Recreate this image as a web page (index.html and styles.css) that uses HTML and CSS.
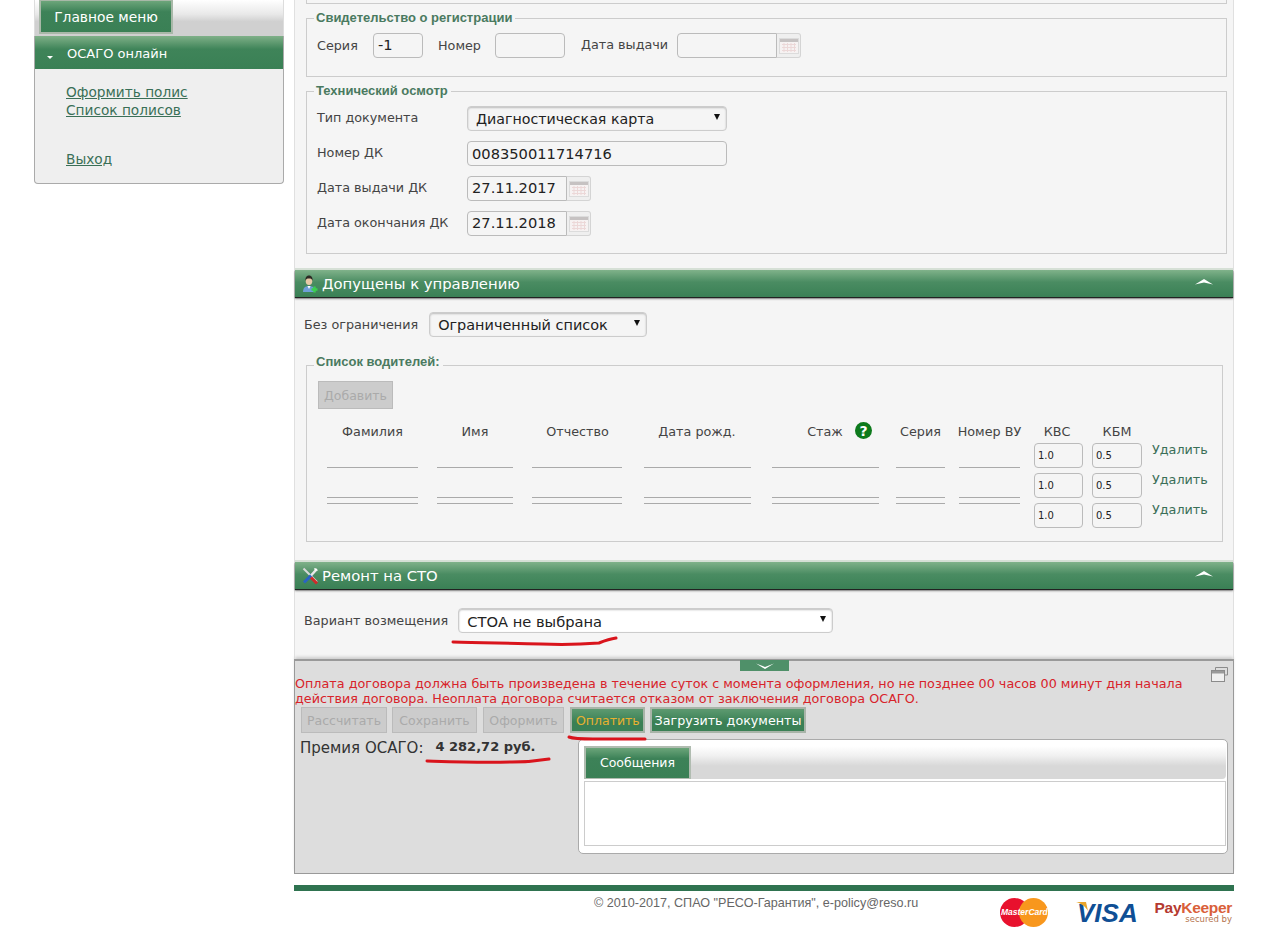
FILE: index.html
```html
<!DOCTYPE html>
<html lang="ru">
<head>
  <meta charset="UTF-8">
  <title>ОСАГО онлайн</title>
  <link rel="stylesheet" href="styles.css">
</head>
<body>
  <div class="page">
    <div class="sidebar">
      <div class="side-tabs"><div class="side-tab">Главное меню</div></div>
      <div class="side-box">
        <div class="side-head"><span class="side-arrow"></span>ОСАГО онлайн</div>
        <div class="side-links">
          <a href="#">Оформить полис</a>
          <a href="#">Список полисов</a>
          <a href="#" class="exit">Выход</a>
        </div>
      </div>
    </div>

    <div class="main">
      <div class="panel">
        <div class="prev-end"></div>

        <fieldset class="group reg">
          <legend>Свидетельство о регистрации</legend>
          <div class="reg-row">
            <span class="lbl lbl-ser">Серия</span>
            <input class="inp inp-ser" value="-1">
            <span class="lbl lbl-num">Номер</span>
            <input class="inp inp-num">
            <span class="lbl lbl-date">Дата выдачи</span>
            <div class="date">
              <input class="inp inp-date">
              <span class="cal"><svg width="20" height="16" viewBox="0 0 20 16"><rect x="0.5" y="0.5" width="19" height="15" fill="#f6f2f2" stroke="#dcdcdc"/><rect x="1" y="1" width="18" height="3" fill="#c6c2c2"/><path d="M3 6.5h14M3 9.5h14M3 12.5h14M5 5v9M8.500 5v9M12 5v9M15.500 5v9" stroke="#ecd8d8" stroke-width="1" fill="none"/></svg></span>
            </div>
          </div>
        </fieldset>

        <fieldset class="group tech">
          <legend>Технический осмотр</legend>
          <div class="form-grid">
            <span class="lbl">Тип документа</span>
            <div class="select sel-doc">Диагностическая карта</div>
            <span class="lbl">Номер ДК</span>
            <input class="inp inp-dk" value="008350011714716">
            <span class="lbl">Дата выдачи ДК</span>
            <div class="date">
              <input class="inp inp-date" value="27.11.2017">
              <span class="cal"><svg width="20" height="16" viewBox="0 0 20 16"><rect x="0.5" y="0.5" width="19" height="15" fill="#f6f2f2" stroke="#dcdcdc"/><rect x="1" y="1" width="18" height="3" fill="#c6c2c2"/><path d="M3 6.5h14M3 9.5h14M3 12.5h14M5 5v9M8.500 5v9M12 5v9M15.500 5v9" stroke="#ecd8d8" stroke-width="1" fill="none"/></svg></span>
            </div>
            <span class="lbl">Дата окончания ДК</span>
            <div class="date">
              <input class="inp inp-date" value="27.11.2018">
              <span class="cal"><svg width="20" height="16" viewBox="0 0 20 16"><rect x="0.5" y="0.5" width="19" height="15" fill="#f6f2f2" stroke="#dcdcdc"/><rect x="1" y="1" width="18" height="3" fill="#c6c2c2"/><path d="M3 6.5h14M3 9.5h14M3 12.5h14M5 5v9M8.500 5v9M12 5v9M15.500 5v9" stroke="#ecd8d8" stroke-width="1" fill="none"/></svg></span>
            </div>
          </div>
        </fieldset>

        <div class="bar bar-drivers">
          <svg class="bar-icon" width="18" height="18" viewBox="0 0 18 18">
            <path d="M2 17c0-4 2-6 6-6s6 2 6 6z" fill="#6f9fd8"/>
            <path d="M6.500 11h3l-1.500 3z" fill="#fff"/>
            <ellipse cx="8" cy="6" rx="3.300" ry="4" fill="#e8c9a8"/>
            <path d="M4.500 6c-.5-4 1.500-5.500 3.500-5.500s4 1.500 3.500 5.500c-.5-2-1.500-2.500-3.500-2.500s-3 .5-3.500 2.500z" fill="#2c2a24"/>
            <path d="M13.500 11.500v6M10.500 14.500h6" stroke="#3bd04f" stroke-width="2.400"/>
          </svg>
          <span>Допущены к управлению</span>
          <svg class="bar-chev" width="18" height="8" viewBox="0 0 18 8"><path d="M0 6.500 9 1l9 5.500L9 4.500z" fill="#fff"/></svg>
        </div>

        <div class="limit-row">
          <span class="lbl">Без ограничения</span>
          <div class="select sel-limit">Ограниченный список</div>
        </div>

        <fieldset class="group drivers">
          <legend>Список водителей:</legend>
          <button class="btn btn-off btn-add" disabled>Добавить</button>
          <table class="drv-table">
            <colgroup>
              <col class="c1"><col class="c2"><col class="c3"><col class="c4"><col class="c5"><col class="c6"><col class="c7"><col class="c8"><col class="c9"><col>
            </colgroup>
            <tr class="drv-head">
              <th>Фамилия</th><th>Имя</th><th>Отчество</th><th>Дата рожд.</th>
              <th class="th-exp">Стаж <svg class="help" width="17" height="17" viewBox="0 0 17 17"><circle cx="8.500" cy="8.500" r="8.500" fill="#0d7a1c"/><text x="8.500" y="13.500" text-anchor="middle" class="help-q">?</text></svg></th>
              <th>Серия</th><th>Номер ВУ</th><th>КВС</th><th>КБМ</th><th></th>
            </tr>
            <tr>
              <td><input class="ln"></td><td><input class="ln"></td><td><input class="ln"></td><td><input class="ln"></td><td><input class="ln"></td><td><input class="ln"></td><td><input class="ln"></td>
              <td><input class="inp k" value="1.0"></td><td><input class="inp k" value="0.5"></td><td class="del">Удалить</td>
            </tr>
            <tr>
              <td><input class="ln"></td><td><input class="ln"></td><td><input class="ln"></td><td><input class="ln"></td><td><input class="ln"></td><td><input class="ln"></td><td><input class="ln"></td>
              <td><input class="inp k" value="1.0"></td><td><input class="inp k" value="0.5"></td><td class="del">Удалить</td>
            </tr>
            <tr class="row-top">
              <td><input class="ln"></td><td><input class="ln"></td><td><input class="ln"></td><td><input class="ln"></td><td><input class="ln"></td><td><input class="ln"></td><td><input class="ln"></td>
              <td><input class="inp k" value="1.0"></td><td><input class="inp k" value="0.5"></td><td class="del">Удалить</td>
            </tr>
          </table>
        </fieldset>

        <div class="bar bar-repair">
          <svg class="bar-icon" width="18" height="18" viewBox="0 0 18 18">
            <path d="M2.500 1.500 16 15" stroke="#d8d8d8" stroke-width="2"/>
            <path d="M11 7.500 3 15.500" stroke="#2b63c4" stroke-width="3"/>
            <path d="M10 8.500 15 3" stroke="#e8e8e8" stroke-width="2.600"/>
            <path d="M13 1.500c2-1 4 .5 3.500 2.500l-2.500-.5z" fill="#fff"/>
            <path d="M10 10.500 16 16.500" stroke="#cf2a2a" stroke-width="3"/>
          </svg>
          <span>Ремонт на СТО</span>
          <svg class="bar-chev" width="18" height="8" viewBox="0 0 18 8"><path d="M0 6.500 9 1l9 5.500L9 4.500z" fill="#fff"/></svg>
        </div>

        <div class="repair-row">
          <span class="lbl">Вариант возмещения</span>
          <div class="select sel-repair">СТОА не выбрана</div>
        </div>
      </div>

      <div class="bottom">
        <div class="handle"><svg width="18" height="6" viewBox="0 0 18 6"><path d="M0 .5 9 4l9-3.500L9 6z" fill="#fff"/></svg></div>
        <svg class="restore" width="17" height="15" viewBox="0 0 17 15"><path d="M4.500 3V.5h12V8H14" fill="none" stroke="#8b8b8b"/><rect x="0.500" y="3.500" width="13" height="11" fill="#f0f0f0" stroke="#8b8b8b"/><rect x="1" y="4" width="12" height="2.500" fill="#9a9a9a"/></svg>
        <p class="notice">Оплата договора должна быть произведена в течение суток с момента оформления, но не позднее 00 часов 00 минут дня начала действия договора. Неоплата договора считается отказом от заключения договора ОСАГО.</p>
        <div class="actions">
          <button class="btn btn-off a1" disabled>Рассчитать</button>
          <button class="btn btn-off a2" disabled>Сохранить</button>
          <button class="btn btn-off a3" disabled>Оформить</button>
          <button class="btn btn-green btn-pay">Оплатить</button>
          <button class="btn btn-green btn-docs">Загрузить документы</button>
        </div>
        <div class="result">
          <div class="premium"><span class="prem-lbl">Премия ОСАГО:</span><b class="prem-val">4 282,72 руб.</b></div>
          <div class="messages">
            <div class="msg-tabs"><div class="msg-tab">Сообщения</div></div>
            <div class="msg-body"></div>
          </div>
        </div>
      </div>

      <div class="footer">
        <div class="copy">© 2010-2017, СПАО "РЕСО-Гарантия", e-policy@reso.ru</div>
        <div class="logos">
          <div class="mc"><span class="mc-r"></span><span class="mc-o"></span><span class="mc-t">MasterCard</span></div>
          <div class="visa"><svg class="visa-wing" width="12" height="9" viewBox="0 0 12 9"><path d="M0 0h10l2 9C9 4 5 1.500 0 0z" fill="#e9a52c"/></svg>VISA</div>
          <div class="pk"><span class="pk-name"><span class="pk-pay">Pay</span>Keeper</span><span class="pk-sub">secured by</span></div>
        </div>
      </div>
    </div>
  </div>

  <svg class="marks" width="1266" height="938" viewBox="0 0 1266 938">
    <path d="M453 642c30 1 60 1 88 2 25 1 45 0 58-1 5-2 10-4 17-5" />
    <path d="M569 737c5 2 12 2 24 2h52" />
    <path d="M427 761c30 1 55 2 85 1 12 0 25-1 37-3" />
  </svg>
</body>
</html>
```

FILE: styles.css
```css
* { box-sizing: border-box; }
html, body { margin: 0; padding: 0; }
body {
  background: #fff;
  font-family: "DejaVu Sans", Verdana, sans-serif;
  font-size: 12px;
  color: #444;
  overflow: hidden;
  height: 938px;
  position: relative;
}
.page {
  display: flex;
  align-items: flex-start;
  padding-left: 34px;
  gap: 10px;
}

/* left menu */
.sidebar { width: 250px; flex: none; }
.side-tabs {
  height: 36px;
  padding-left: 4px;
  background: linear-gradient(#fff, #e8e8e8 40%, #d0d0d0 60%, #d0d0d0);
  border: 1px solid #ddd;
  border-width: 0 1px;
}
.side-tab {
  width: 134px;
  height: 34px;
  background: linear-gradient(#6ca57a, #3d8258 35%, #3a8055);
  border: 2px solid #a8b8a8;
  border-top-width: 1px;
  color: #fff;
  font-size: 13.800px;
  line-height: 32px;
  text-align: center;
}
.side-box {
  height: 148px;
  background: #efefef;
  border: 1px solid #aaa;
  border-top: none;
  border-radius: 0 0 4px 4px;
}
.side-head {
  height: 33px;
  background: linear-gradient(#7fb088, #3f8459 40%, #3a8055);
  color: #fff;
  font-size: 13px;
  line-height: 35px;
  padding-left: 32px;
  position: relative;
}
.side-arrow {
  position: absolute;
  left: 12px;
  top: 20px;
  border: 3.500px solid transparent;
  border-top-color: #fff;
  border-bottom: none;
}
.side-links { padding: 14px 0 0 31px; display: flex; flex-direction: column; }
.side-links a {
  color: #3a6f57;
  font-size: 13.700px;
  line-height: 18px;
}
.side-links .exit { margin-top: 31px; }

/* main column */
.main { width: 940px; flex: none; }
.panel {
  height: 659px;
  background: #f5f5f5;
  border: 1px solid #e0e0e0;
  border-width: 0 1px;
  padding: 0 6px 0 11px;
}
.prev-end {
  height: 4px;
  border: 1px solid #ccc;
  border-top: none;
}
.group {
  margin: 7px 0 0;
  padding: 0 10px;
  border: 1px solid #ccc;
  min-width: 0;
}
.group legend {
  padding: 0 3px 0 2px;
  margin-left: -3px;
  font-family: "Liberation Sans", Arial, sans-serif;
  font-weight: bold;
  font-size: 13px;
  line-height: 14px;
  color: #4a7a60;
}
.lbl { font-size: 12.750px; color: #444; white-space: nowrap; }
.inp {
  height: 25px;
  border: 1px solid #bbb;
  border-radius: 4px;
  background: #f5f5f5;
  padding: 0 4px;
  font-family: "DejaVu Sans", Verdana, sans-serif;
  font-size: 14.670px;
  color: #222;
  outline: none;
}

.reg { height: 66px; }
.reg-row { display: flex; align-items: center; margin-top: 8px; }
.lbl-ser { width: 56px; }
.inp-ser { width: 50px; padding-bottom: 2px; }
.lbl-num { width: 57px; margin-left: 15px; }
.inp-num { width: 70px; }
.lbl-date { width: 96px; margin-left: 16px; margin-top: -3px; }
.inp-date { width: 100px; border-radius: 4px 0 0 4px; padding-bottom: 2px; }
.date { display: flex; width: max-content; }
.cal {
  width: 24px;
  height: 25px;
  background: #efefef;
  border: 1px solid #d4d4d4;
  border-left: none;
  border-radius: 0 3px 3px 0;
  display: flex;
  align-items: center;
  justify-content: center;
}

.tech { height: 170px; }
.form-grid {
  display: grid;
  grid-template-columns: 150px 260px;
  row-gap: 10px;
  align-items: center;
  margin-top: 8px;
}
.form-grid .lbl { margin-top: -2px; }
.inp-dk { width: 260px; height: 25px; }
.form-grid .date { height: 25px; }

.select {
  position: relative;
  height: 25px;
  background: #f5f5f5;
  border: 1px solid #ccc;
  border-radius: 4px;
  box-shadow: inset 0 1px 2px #bbb;
  font-size: 14.200px;
  line-height: 25px;
  color: #222;
  padding-left: 8px;
}
.select::after {
  content: "";
  position: absolute;
  right: 6px;
  top: 7px;
  border: 3px solid transparent;
  border-top: 6px solid #111;
  border-bottom: none;
}
.sel-doc { width: 260px; }
.sel-limit { width: 218px; margin-left: 11px; font-size: 14.450px; }
.sel-repair { width: 375px; margin-left: 10px; background: #fff; font-size: 14.670px; }

.bar {
  position: relative;
  display: flex;
  align-items: center;
  height: 27px;
  margin: 16px -6px 0 -11px;
  padding-left: 6px;
  background: linear-gradient(#80b28a, #4a8c62 45%, #3a8055);
  box-shadow: 0 1px 1px #222, 0 2px 2px #999, 0 -2px 0 #d6e0d6;
  color: #fff;
  font-size: 14.800px;
}
.bar-icon { margin-right: 3px; flex: none; }
.bar-chev { position: absolute; right: 20px; top: 8px; }
.bar-repair { margin-top: 20px; }

.limit-row { display: flex; align-items: center; margin: 15px 0 0 -2px; }
.drivers { height: 187px; margin-top: 18px; width: 917px; padding: 0 11px; }
.drivers legend { padding-bottom: 6px; margin-left: -4px; }
.btn {
  height: 26px;
  font-family: "DejaVu Sans", Verdana, sans-serif;
  font-size: 12.500px;
  padding: 0 4px;
}
.btn-off {
  background: #ccc;
  border: 1px solid #bbb;
  color: #aaa;
}
.btn-green {
  background: linear-gradient(#5d9a70, #3a8055 60%);
  border: 2px solid #a8b4a8;
  color: #fff;
}
.btn-docs { width: 156px; padding: 0; font-size: 12.700px; white-space: nowrap; }
.btn-add { width: 75px; height: 28px; display: block; margin-top: 6px; }

.drv-table {
  table-layout: fixed;
  border-collapse: collapse;
  width: 905px;
  margin-top: 12px;
}
.drv-table .c1 { width: 109px; }
.drv-table .c2 { width: 96px; }
.drv-table .c3 { width: 109px; }
.drv-table .c4 { width: 130px; }
.drv-table .c5 { width: 126px; }
.drv-table .c6 { width: 65px; }
.drv-table .c7 { width: 73px; }
.drv-table .c8 { width: 62px; }
.drv-table .c9 { width: 58px; }
.drv-table th {
  font-weight: normal;
  font-size: 12.750px;
  color: #444;
  height: 22px;
  padding: 0 0 2px;
}
.th-exp { position: relative; }
.help { position: absolute; left: 93px; top: 1px; }
.help-q { font-family: "DejaVu Sans", sans-serif; font-weight: bold; font-size: 14px; fill: #fff; }
.drv-table td { height: 30px; padding: 0; vertical-align: top; }
.drv-table td:nth-child(1) { padding: 0 9px; }
.drv-table td:nth-child(2) { padding: 0 10px; }
.drv-table td:nth-child(3) { padding: 0 10px 0 9px; }
.drv-table td:nth-child(4) { padding: 0 11px 0 12px; }
.drv-table td:nth-child(5) { padding: 0 9px 0 10px; }
.drv-table td:nth-child(6) { padding: 0 8px; }
.drv-table td:nth-child(7) { padding: 0 6px; }
.drv-table td:nth-child(8) { padding: 0 5px 0 8px; }
.drv-table td:nth-child(9) { padding: 0 4px; }
.ln {
  display: block;
  width: 100%;
  height: 25px;
  border: none;
  border-bottom: 1px solid #aaa;
  background: transparent;
  outline: none;
}
.row-top .ln { border-bottom: none; border-top: 1px solid #aaa; }
.k {
  display: block;
  width: 100%;
  font-size: 10px;
  padding: 0 3px;
}
.drv-table .del {
  padding: 0 0 0 6px;
  font-size: 12.750px;
  color: #3a6f57;
  line-height: 13px;
}

.repair-row { display: flex; align-items: center; margin: 19px 0 0 -2px; }

/* bottom block */
.bottom {
  position: relative;
  height: 215px;
  background: #ddd;
  border: 1px solid #999;
  border-top: 2px solid #999;
  box-shadow: 0 -3px 3px -1px #ccc;
}
.handle {
  position: absolute;
  top: -1px;
  left: 445px;
  width: 49px;
  height: 11px;
  background: #4f9069;
  display: flex;
  align-items: center;
  justify-content: center;
}
.restore { position: absolute; top: 6px; right: 5px; }
.notice {
  margin: 0;
  padding: 15px 40px 0 0;
  font-size: 12.750px;
  line-height: 15px;
  color: #d8232a;
}
.actions { display: flex; margin: 1px 0 0 6px; }
.actions .btn { margin-right: 5px; flex: none; }
.a1 { width: 86px; }
.a2 { width: 85px; }
.a3 { width: 81px; margin-left: 1px; }
.btn-pay { width: 75px; color: #e8b030; margin-left: 1px; }

.result { display: flex; margin-top: 6px; }
.premium { width: 283px; padding: 0 0 0 5px; display: flex; }
.prem-lbl { font-size: 15px; line-height: 18px; color: #333; }
.prem-val { font-size: 13px; line-height: 16px; color: #333; margin-left: 12px; }
.messages {
  width: 650px;
  height: 115px;
  background: #fff;
  border: 1px solid #aaa;
  border-radius: 5px;
  padding: 6px 1px 0 5px;
}
.msg-tabs {
  height: 33px;
  background: linear-gradient(#fff, #f0f0f0 30%, #d8d8d8 60%);
  border-radius: 0 0 4px 4px;
}
.msg-tab {
  width: 107px;
  height: 33px;
  background: linear-gradient(#6ca57a, #3d8258 35%, #3a8055);
  border: 2px solid #b0bcb0;
  border-bottom-width: 1px;
  color: #fff;
  font-size: 12.500px;
  line-height: 30px;
  text-align: center;
}
.msg-body {
  height: 65px;
  margin-top: 2px;
  border: 1px solid #ccc;
  background: #fff;
}

/* footer */
.footer {
  position: relative;
  margin-top: 11px;
  border-top: 6px solid #2f7350;
}
.copy {
  padding: 4px 0 0 300px;
  font-family: "Liberation Sans", Arial, sans-serif;
  font-size: 12.600px;
  line-height: 16px;
  color: #666;
}
.logos { position: absolute; top: 7px; left: 706px; width: 234px; height: 32px; }
.mc { position: absolute; left: 0; top: 0; width: 48px; height: 30px; }
.mc-r, .mc-o { position: absolute; top: 0; width: 29px; height: 29px; border-radius: 50%; }
.mc-r { left: 0; background: #e8112d; }
.mc-o { left: 19px; background: #f8971d; }
.mc-t {
  position: absolute;
  left: 1px;
  top: 9px;
  font-family: "Liberation Sans", Arial, sans-serif;
  font-style: italic;
  font-weight: bold;
  font-size: 8.500px;
  line-height: 11px;
  color: #fff;
  white-space: nowrap;
}
.visa {
  position: absolute;
  left: 77px;
  top: 3px;
  font-family: "Liberation Sans", Arial, sans-serif;
  font-style: italic;
  font-weight: bold;
  font-size: 26px;
  line-height: 24px;
  color: #0f4f95;
}
.visa-wing { position: absolute; left: -1px; top: 1px; }
.pk { position: absolute; left: 155px; top: 2px; display: flex; flex-direction: column; align-items: flex-end; width: 77px; }
.pk-name {
  font-family: "Liberation Sans", Arial, sans-serif;
  font-weight: bold;
  font-size: 15.500px;
  line-height: 15px;
  letter-spacing: -0.3px;
  color: #d9603a;
}
.pk-pay { color: #b53a30; }
.pk-sub { font-size: 8.500px; line-height: 9px; color: #b5754f; }

/* red pen marks on top of the page */
.marks { position: absolute; left: 0; top: 0; pointer-events: none; }
.marks path { fill: none; stroke: #d9141c; stroke-width: 3; stroke-linecap: round; }
```
